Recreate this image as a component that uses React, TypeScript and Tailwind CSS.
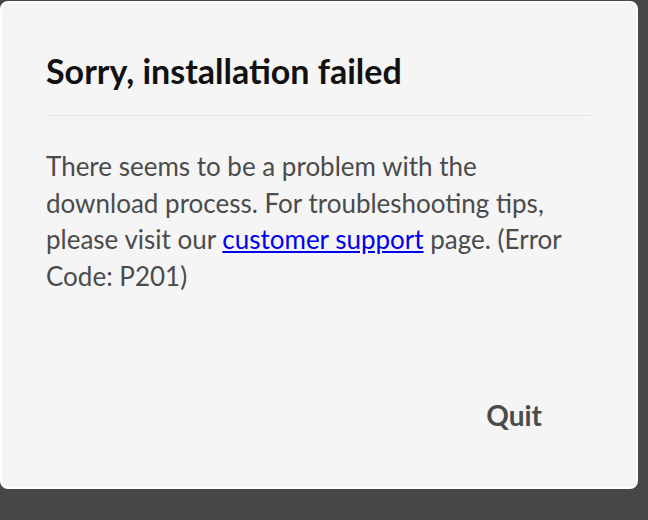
import React from 'react';

export default function App() {
  return (
    <div className="w-[648px] h-[520px] bg-[#474747] pt-px" style={{ fontFamily: 'Lato, "Open Sans", sans-serif' }}>
      <div className="w-[638px] h-[488px] rounded-lg border-2 border-white bg-[#f5f5f5] flex flex-col">
        {/* Header */}
        <div className="pl-[44px] pr-[46px] pt-[48px]">
          <h1 className="text-[34px] leading-[40px] font-bold text-[#111111]">Sorry, installation failed</h1>
          <div className="mt-[24px] h-px bg-[#e4e4e4]" />
        </div>

        {/* Body */}
        <p className="pl-[44px] pt-[32px] text-[26px] leading-[36.5px] text-[#4b4b4b]">
          There seems to be a problem with the
          <br />
          download process. For troubleshooting tips,
          <br />
          please visit our{' '}
          <a href="#" className="text-[#0000ee] underline underline-offset-2">
            customer support
          </a>{' '}
          page. (Error
          <br />
          Code: P201)
        </p>

        {/* Footer */}
        <div className="mt-auto flex justify-end pr-[94px] pb-[51px]">
          <button className="text-[28px] font-bold text-[#4b4b4b]">Quit</button>
        </div>
      </div>
    </div>
  );
}
